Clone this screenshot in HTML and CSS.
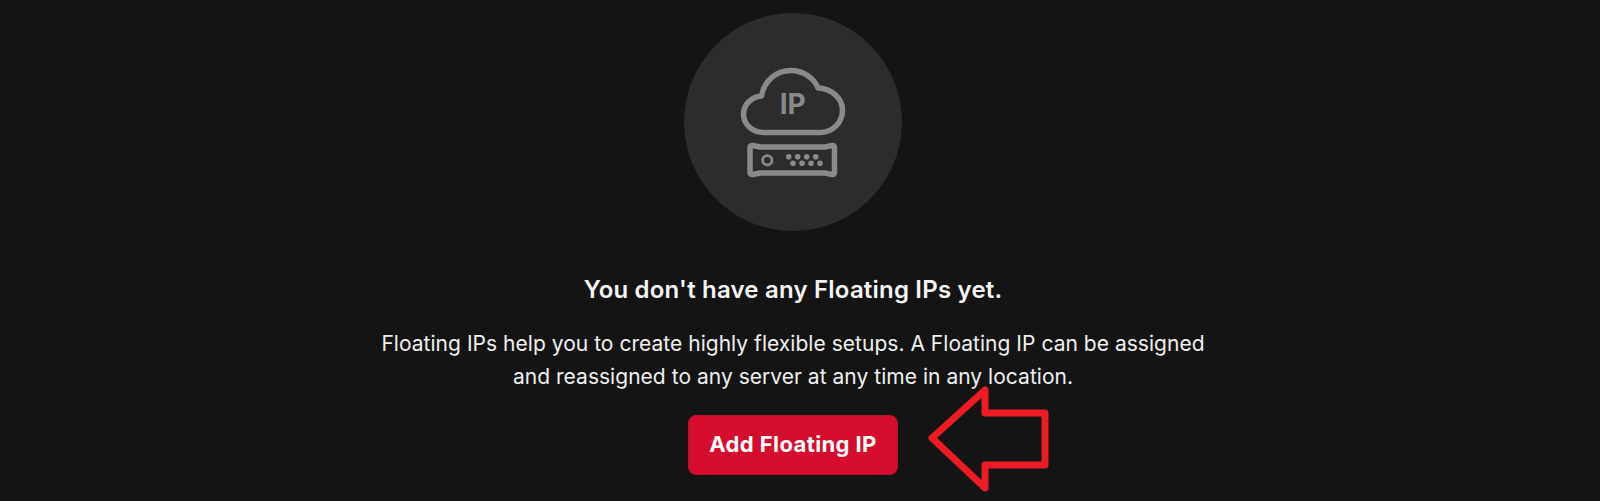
FILE: index.html
```html
<!DOCTYPE html>
<html>
<head>
  <meta charset="utf-8">
  <meta name="viewport" content="width=device-width, initial-scale=1">
  <title>Floating IPs</title>
  <link rel="stylesheet" href="styles.css">
</head>
<body>
<main class="empty">
  <div class="empty-icon">
    <svg class="cloud-ip" viewBox="-2 -3 130 130" width="130" height="130">
      <path class="line" d="M36 72.5H90C103 72.5 112.5 62.5 112.5 50C112.5 38 101 28.5 88 28C84 18 73 10.5 61 10.5C46 10.5 34 21 31.5 36C21 37 13.5 45 13.5 54C13.5 64 22 72.5 34 72.5Z"/>
      <text class="ip" x="62.7" y="54.3" text-anchor="middle">IP</text>
      <path class="line" d="M23 85.5L30 87H95L102 85.5Q104.5 85.5 104.5 88V112Q104.5 114.5 102 114.5L95 113H30L23 114.5Q20 114.5 20 112V88Q20 85.5 23 85.5Z"/>
      <circle class="ring" cx="37.3" cy="100.3" r="4.7"/>
      <g class="dots">
        <circle cx="58.7" cy="96.7" r="2.8"/>
        <circle cx="67.7" cy="96.7" r="2.8"/>
        <circle cx="76.7" cy="96.7" r="2.8"/>
        <circle cx="85.7" cy="96.7" r="2.8"/>
        <circle cx="63" cy="103.3" r="2.8"/>
        <circle cx="72" cy="103.3" r="2.8"/>
        <circle cx="81" cy="103.3" r="2.8"/>
        <circle cx="90" cy="103.3" r="2.8"/>
      </g>
    </svg>
  </div>
  <h2 class="empty-title">You don't have any Floating IPs yet.</h2>
  <p class="empty-text">Floating IPs help you to create highly flexible setups. A Floating IP can be assigned<br>and reassigned to any server at any time in any location.</p>
  <button class="add-btn">Add Floating IP</button>
</main>
<svg class="arrow" viewBox="0 0 130 120" width="130" height="120">
  <path d="M5 58L58 10V33H118V85H58V108Z"/>
</svg>
</body>
</html>
```

FILE: styles.css
```css
html, body {
  margin: 0;
  height: 501px;
  overflow: hidden;
  background: #141414;
}

body {
  position: relative;
  font-family: "Inter", "Liberation Sans", sans-serif;
  color: #f2f2f2;
}

.empty {
  display: flex;
  flex-direction: column;
  align-items: center;
  padding: 13px 14px 0 0;
}

.empty-icon {
  width: 218px;
  height: 218px;
  border-radius: 50%;
  background: #2c2c2c;
  display: flex;
  align-items: center;
  justify-content: center;
}

.cloud-ip .line {
  fill: none;
  stroke: #8a8a8a;
  stroke-width: 5.5;
  stroke-linejoin: round;
}

.cloud-ip .ip {
  font-family: "Inter", sans-serif;
  font-size: 28px;
  font-weight: 700;
  fill: #8a8a8a;
}

.cloud-ip .ring {
  fill: none;
  stroke: #8a8a8a;
  stroke-width: 2.8;
}

.cloud-ip .dots {
  fill: #8a8a8a;
}

.empty-title {
  margin: 44px 0 0;
  font-size: 24px;
  line-height: 30px;
  font-weight: 600;
  letter-spacing: 0.2px;
  color: #f5f5f5;
}

.empty-text {
  margin: 22px 0 0;
  font-size: 21px;
  line-height: 33px;
  letter-spacing: 0.03px;
  text-align: center;
  color: #f0f0f0;
}

.add-btn {
  margin-top: 22px;
  width: 210px;
  height: 60px;
  padding: 0 0 3px;
  border: 1px solid #b5122d;
  border-radius: 8px;
  background: #d50c2d;
  color: #fff;
  font-family: inherit;
  font-size: 22px;
  font-weight: 700;
  letter-spacing: 0.4px;
}

.arrow {
  position: absolute;
  left: 927px;
  top: 380px;
}

.arrow path {
  fill: none;
  stroke: #ed1c24;
  stroke-width: 7;
  stroke-linejoin: round;
}
```
